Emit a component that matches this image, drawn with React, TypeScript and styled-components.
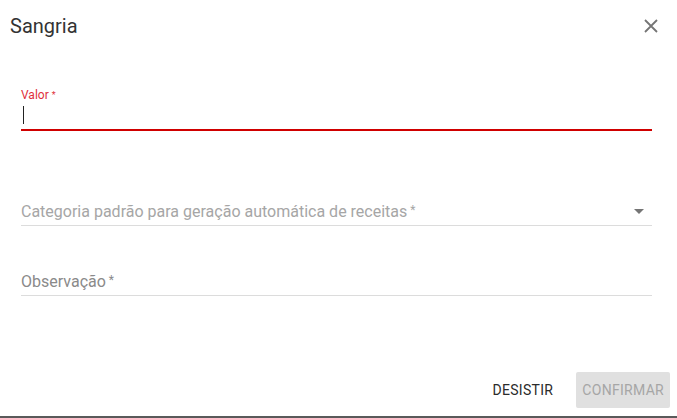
import React from 'react';
import styled, { createGlobalStyle } from 'styled-components';

const GlobalStyle = createGlobalStyle`
  html, body {
    margin: 0;
    padding: 0;
    background-color: #5a5a5a;
  }
  body {
    font-family: Roboto, "Liberation Sans", Arial, sans-serif;
  }
`;

const Dialog = styled.div`
  width: 677px;
  height: 416px;
  background-color: #ffffff;
  display: flex;
  flex-direction: column;
  box-sizing: border-box;
`;

const Header = styled.div`
  display: flex;
  flex-direction: row;
  align-items: center;
  justify-content: space-between;
  padding: 14px 18px 0 10px;
  height: 24px;
`;

const Title = styled.h2`
  margin: 0;
  font-size: 20px;
  font-weight: 400;
  line-height: 24px;
  color: #333333;
`;

const CloseButton = styled.button`
  border: none;
  background: none;
  padding: 0;
  width: 16px;
  height: 16px;
  display: flex;
  align-items: center;
  justify-content: center;
  cursor: pointer;
`;

const Content = styled.div`
  display: flex;
  flex-direction: column;
  padding: 0 25px 0 21px;
  flex: 1;
`;

const Field = styled.div<{ $top: number }>`
  position: relative;
  margin-top: ${(p) => p.$top}px;
`;

const FloatLabel = styled.div`
  font-size: 12px;
  line-height: 14px;
  color: #e0303a;
  height: 14px;
`;

const InputRow = styled.div<{ $active?: boolean }>`
  display: flex;
  align-items: center;
  height: ${(p) => (p.$active ? 27 : 28)}px;
  border-bottom: ${(p) => (p.$active ? '2px solid #d00000' : '1px solid #dcdcdc')};
`;

const Caret = styled.span`
  display: block;
  width: 1px;
  height: 18px;
  margin-left: 2px;
  margin-bottom: 2px;
  background-color: #222222;
`;

const Placeholder = styled.span<{ $dark?: boolean }>`
  flex: 1;
  font-size: 16px;
  line-height: 19px;
  color: ${(p) => (p.$dark ? '#8a8a8a' : '#a6a6a6')};
  white-space: nowrap;
`;

const Asterisk = styled.span<{ $small?: boolean }>`
  font-size: ${(p) => (p.$small ? 9 : 12)}px;
  vertical-align: top;
  margin-left: 3px;
  position: relative;
  top: ${(p) => (p.$small ? 0 : -1)}px;
`;

const Arrow = styled.span`
  width: 0;
  height: 0;
  margin-right: 8px;
  border-left: 5px solid transparent;
  border-right: 5px solid transparent;
  border-top: 5px solid #757575;
`;

const Actions = styled.div`
  display: flex;
  flex-direction: row;
  justify-content: flex-end;
  align-items: center;
  gap: 7px;
  padding: 0 7px 8px 0;
`;

const ActionButton = styled.button<{ $disabled?: boolean }>`
  height: 36px;
  padding: 0 ${(p) => (p.$disabled ? 6 : 16)}px;
  min-width: 64px;
  border: none;
  border-radius: 2px;
  font-family: Roboto, "Liberation Sans", Arial, sans-serif;
  font-size: 14px;
  font-weight: 400;
  letter-spacing: 0.3px;
  text-transform: uppercase;
  background-color: ${(p) => (p.$disabled ? '#e0e0e0' : 'transparent')};
  color: ${(p) => (p.$disabled ? '#a6a6a6' : '#2b2b2b')};
  cursor: ${(p) => (p.$disabled ? 'default' : 'pointer')};
`;

function CloseIcon(): React.JSX.Element {
  return (
    <svg width="16" height="16" viewBox="0 0 16 16">
      <path d="M2 2 L14 14 M14 2 L2 14" stroke="#757575" strokeWidth="1.8" fill="none" />
    </svg>
  );
}

export default function App(): React.JSX.Element {
  return (
    <>
      <GlobalStyle />
      <Dialog>
        <Header>
          <Title>Sangria</Title>
          <CloseButton aria-label="Fechar">
            <CloseIcon />
          </CloseButton>
        </Header>
        <Content>
          <Field $top={50}>
            <FloatLabel>
              Valor<Asterisk $small>*</Asterisk>
            </FloatLabel>
            <InputRow $active>
              <Caret />
            </InputRow>
          </Field>
          <Field $top={66}>
            <InputRow>
              <Placeholder>
                Categoria padrão para geração automática de receitas<Asterisk>*</Asterisk>
              </Placeholder>
              <Arrow />
            </InputRow>
          </Field>
          <Field $top={41}>
            <InputRow>
              <Placeholder $dark>
                Observação<Asterisk>*</Asterisk>
              </Placeholder>
            </InputRow>
          </Field>
        </Content>
        <Actions>
          <ActionButton>Desistir</ActionButton>
          <ActionButton $disabled>Confirmar</ActionButton>
        </Actions>
      </Dialog>
    </>
  );
}
